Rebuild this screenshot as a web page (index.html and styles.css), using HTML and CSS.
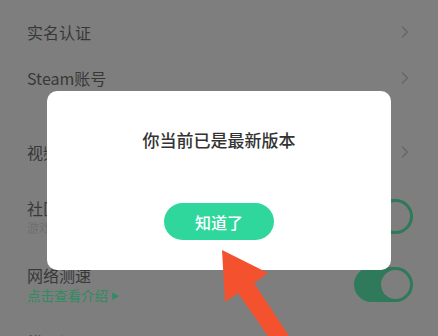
FILE: index.html
```html
<!DOCTYPE html>
<html lang="zh-CN">
<head>
    <meta charset="UTF-8">
    <meta name="viewport" content="width=device-width, initial-scale=1.0">
    <title>设置</title>
    <link rel="stylesheet" href="styles.css">
</head>
<body>
    <main class="settings">
        <div class="row">
            <span class="row-title">实名认证</span>
            <svg class="chevron" width="8" height="12" viewBox="0 0 8 12"><polyline points="1.5,1 6.5,6 1.5,11" /></svg>
        </div>
        <div class="row">
            <span class="row-title">Steam账号</span>
            <svg class="chevron" width="8" height="12" viewBox="0 0 8 12"><polyline points="1.5,1 6.5,6 1.5,11" /></svg>
        </div>

        <div class="row section-start">
            <span class="row-title">视频自动播放</span>
            <svg class="chevron" width="8" height="12" viewBox="0 0 8 12"><polyline points="1.5,1 6.5,6 1.5,11" /></svg>
        </div>
        <div class="row tall">
            <div class="row-text">
                <span class="row-title">社区消息提醒</span>
                <span class="row-sub">游戏动态推送通知</span>
            </div>
            <span class="switch on"><span class="knob"></span></span>
        </div>
        <div class="row tall">
            <div class="row-text">
                <span class="row-title">网络测速</span>
                <span class="row-link">点击查看介绍 <span class="tri">&#9654;</span></span>
            </div>
            <span class="switch on"><span class="knob"></span></span>
        </div>
        <div class="row last">
            <span class="row-title">横屏设置</span>
        </div>
    </main>

    <div class="dialog">
        <p class="dialog-msg">你当前已是最新版本</p>
        <button class="dialog-btn">知道了</button>
    </div>

    <!-- red hint arrow over the dialog -->
    <svg class="hint-arrow" width="438" height="336" viewBox="0 0 438 336">
        <polygon points="222,250 268,273 254,283 289,336 268,336 238,293 225,302" fill="#f4512f" />
    </svg>
</body>
</html>
```

FILE: styles.css
```css
* {
    margin: 0;
    padding: 0;
    box-sizing: border-box;
}
body {
    font-family: "Noto Sans CJK SC", "Noto Sans", sans-serif;
    background-color: #7e7e7e;
    color: #383838;
    width: 438px;
    height: 336px;
    overflow: hidden;
    position: relative;
}
.settings {
    display: flex;
    flex-direction: column;
    padding: 9px 26px 0 27px;
}
.row {
    display: flex;
    align-items: center;
    justify-content: space-between;
    height: 46px;
    flex-shrink: 0;
}
.row.section-start {
    margin-top: 28px;
}
.row.tall {
    height: 68px;
}
.row.section-start + .row.tall {
    margin-top: 7px;
}
.row.last {
    align-items: flex-start;
    padding-top: 13px;
    height: 30px;
    overflow: hidden;
}
.row-text {
    display: flex;
    flex-direction: column;
}
.row-title {
    font-size: 16px;
    line-height: 22px;
}
.row-sub {
    font-size: 12px;
    line-height: 17px;
    color: #6e6e6e;
}
.row-link {
    font-size: 13.5px;
    line-height: 19px;
    color: #2f8c63;
}
.tri {
    font-size: 8px;
    vertical-align: 2px;
}
.chevron {
    fill: none;
    stroke: #686868;
    stroke-width: 1.6;
    stroke-linecap: round;
    stroke-linejoin: round;
    margin-right: 3px;
}
.switch {
    width: 59px;
    height: 35px;
    border-radius: 18px;
    background-color: #2e7a5a;
    display: flex;
    justify-content: flex-end;
    align-items: center;
    padding-right: 1px;
    margin-right: -1px;
}
.knob {
    width: 33px;
    height: 33px;
    border-radius: 50%;
    background-color: #7e7e7e;
    border: 2px solid #2e7a5a;
}
.dialog {
    position: absolute;
    left: 47px;
    top: 91px;
    width: 344px;
    height: 179px;
    background-color: #fff;
    border-radius: 10px;
    display: flex;
    flex-direction: column;
    align-items: center;
    padding-top: 37px;
}
.dialog-msg {
    font-size: 17px;
    line-height: 24px;
    color: #333;
    font-weight: 500;
}
.dialog-btn {
    margin-top: 51px;
    width: 110px;
    height: 37px;
    border: none;
    border-radius: 19px;
    background-color: #30d79d;
    color: #fff;
    font-family: inherit;
    font-size: 16px;
    font-weight: 500;
}
.hint-arrow {
    position: absolute;
    left: 0;
    top: 0;
}
```
